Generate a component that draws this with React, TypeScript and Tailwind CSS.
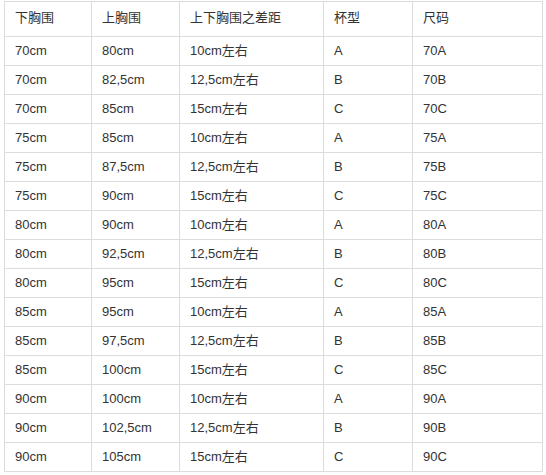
import React from 'react';

const rows: string[][] = [
  ['70cm', '80cm', '10cm左右', 'A', '70A'],
  ['70cm', '82,5cm', '12,5cm左右', 'B', '70B'],
  ['70cm', '85cm', '15cm左右', 'C', '70C'],
  ['75cm', '85cm', '10cm左右', 'A', '75A'],
  ['75cm', '87,5cm', '12,5cm左右', 'B', '75B'],
  ['75cm', '90cm', '15cm左右', 'C', '75C'],
  ['80cm', '90cm', '10cm左右', 'A', '80A'],
  ['80cm', '92,5cm', '12,5cm左右', 'B', '80B'],
  ['80cm', '95cm', '15cm左右', 'C', '80C'],
  ['85cm', '95cm', '10cm左右', 'A', '85A'],
  ['85cm', '97,5cm', '12,5cm左右', 'B', '85B'],
  ['85cm', '100cm', '15cm左右', 'C', '85C'],
  ['90cm', '100cm', '10cm左右', 'A', '90A'],
  ['90cm', '102,5cm', '12,5cm左右', 'B', '90B'],
  ['90cm', '105cm', '15cm左右', 'C', '90C'],
];

const headers = ['下胸围', '上胸围', '上下胸围之差距', '杯型', '尺码'];
const widths = ['w-[87px]', 'w-[88px]', 'w-[144px]', 'w-[89px]', 'w-[130px]'];

export default function App() {
  return (
    <div className="bg-white min-h-screen pt-px pl-[4px] text-[#333] text-[13px] font-['Liberation_Sans','Noto_Sans_CJK_SC',sans-serif]">
      <table className="border-collapse table-fixed">
        <thead>
          <tr className="h-[35px]">
            {headers.map((h, i) => (
              <th
                key={h}
                className={`${widths[i]} border border-[#dcdcdc] px-[10px] pt-[6px] align-top text-left font-normal`}
              >
                {h}
              </th>
            ))}
          </tr>
        </thead>
        <tbody>
          {rows.map((r, ri) => (
            <tr key={ri} className="h-[29px]">
              {r.map((c, ci) => (
                <td key={ci} className="border border-[#dcdcdc] px-[10px] align-middle">
                  {c}
                </td>
              ))}
            </tr>
          ))}
        </tbody>
      </table>
    </div>
  );
}
